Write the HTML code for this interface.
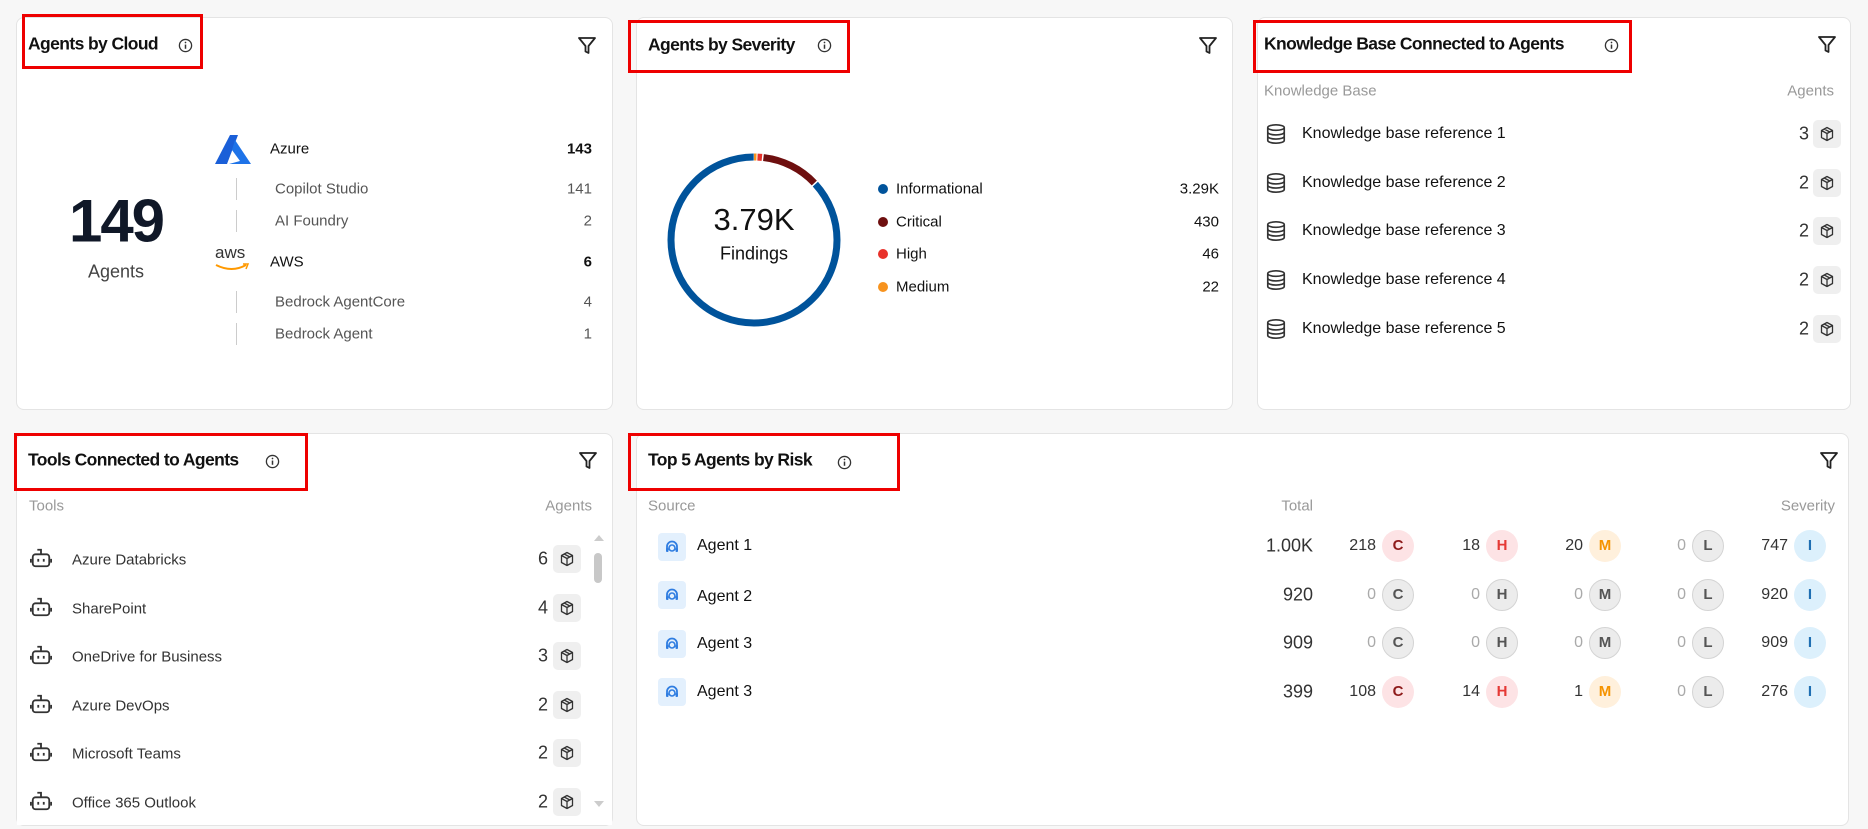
<!DOCTYPE html>
<html><head><meta charset="utf-8"><style>
*{box-sizing:border-box;margin:0;padding:0}
body{width:1868px;height:829px;background:#f7f7f7;font-family:"Liberation Sans",Arial,sans-serif;position:relative;overflow:hidden;color:#111}
.a{position:absolute;white-space:nowrap}
.card{position:absolute;background:#fff;border:1px solid #e4e4e4;border-radius:8px}
.red{position:absolute;border:3px solid #ee0000}
.t{font-size:17.5px;font-weight:bold;letter-spacing:-0.6px;transform:translateY(-50%)}
.m{transform:translateY(-50%)}
.r{transform:translate(-100%,-50%)}
.hd{font-size:15px;color:#999;transform:translateY(-50%)}
.hdr{font-size:15px;color:#999;transform:translate(-100%,-50%)}
.sub{font-size:15px;color:#555}
.cube{position:absolute;width:28px;height:28px;background:#efefef;border-radius:5px;transform:translateY(-50%)}
.badge{position:absolute;width:32px;height:32px;border-radius:50%;transform:translate(-50%,-50%);font-size:15px;font-weight:bold;text-align:center;line-height:32px}
.bC{background:#fde3e5;color:#8e1b1b}.bH{background:#fde3e5;color:#e53935}.bM{background:#fff0dc;color:#f59300}
.bG{background:#ececec;color:#555;border:1px solid #d4d4d4;line-height:30px}.bI{background:#dcf0fc;color:#1f6fb3}
.num{font-size:16px;color:#333;transform:translate(-100%,-50%)}
.z{color:#aaa}
</style></head><body>
<svg width="0" height="0" style="position:absolute"><defs>
<symbol id="info" viewBox="0 0 16 16"><circle cx="8" cy="8" r="6.5" fill="none" stroke="#333" stroke-width="1.4"/><line x1="8" y1="7" x2="8" y2="11.5" stroke="#333" stroke-width="1.6"/><circle cx="8" cy="4.8" r="0.9" fill="#333"/></symbol>
<symbol id="filt" viewBox="0 0 20 20"><path d="M2 3H18L11.5 11V18L8.5 16.5V11Z" fill="none" stroke="#222" stroke-width="1.8" stroke-linejoin="round"/></symbol>
<symbol id="cubeI" viewBox="0 0 16 16"><path d="M8 1.5L13.5 4.5V11.5L8 14.5L2.5 11.5V4.5Z M2.5 4.5L8 7.5L13.5 4.5 M8 7.5V14.5 M5.2 3L10.8 6" fill="none" stroke="#333" stroke-width="1.3" stroke-linejoin="round"/></symbol>
<symbol id="db" viewBox="0 0 24 24"><ellipse cx="12" cy="5" rx="9" ry="3" fill="none" stroke="#333" stroke-width="1.8"/><path d="M3 5V19C3 20.7 7 22 12 22S21 20.7 21 19V5 M3 10C3 11.7 7 13 12 13S21 11.7 21 10 M3 14.5C3 16.2 7 17.5 12 17.5S21 16.2 21 14.5" fill="none" stroke="#333" stroke-width="1.8"/></symbol>
<symbol id="bot" viewBox="0 0 24 24"><rect x="3" y="8" width="18" height="13" rx="3" fill="none" stroke="#333" stroke-width="2"/><path d="M12 8V3H8 M1 13V17 M23 13V17" fill="none" stroke="#333" stroke-width="2"/><line x1="9" y1="13" x2="9" y2="16" stroke="#333" stroke-width="2"/><line x1="15" y1="13" x2="15" y2="16" stroke="#333" stroke-width="2"/></symbol>
<symbol id="ag" viewBox="0 0 16 16"><path d="M3 11V7.5A5 5 0 0 1 13 7.5V11" fill="none" stroke="#2f7de1" stroke-width="1.8"/><circle cx="8" cy="9" r="3" fill="none" stroke="#2f7de1" stroke-width="1.6"/><rect x="2" y="9" width="2.5" height="4" rx="1" fill="#2f7de1"/><rect x="11.5" y="9" width="2.5" height="4" rx="1" fill="#2f7de1"/></symbol>
</defs></svg>

<!-- Card 1 -->
<div class="card" style="left:16px;top:17px;width:597px;height:393px"></div>
<div class="red" style="left:22px;top:14px;width:181px;height:55px"></div>
<div class="a t" style="left:28px;top:44px">Agents by Cloud</div>
<svg class="a" style="left:178px;top:38px" width="15" height="15"><use href="#info"/></svg>
<svg class="a" style="left:577px;top:35px" width="20" height="20"><use href="#filt"/></svg>
<div class="a" style="left:116px;top:221px;transform:translate(-50%,-50%);font-size:60px;font-weight:bold;color:#101828;letter-spacing:-2px">149</div>
<div class="a" style="left:116px;top:272px;transform:translate(-50%,-50%);font-size:18px;color:#444">Agents</div>
<svg class="a" style="left:215px;top:135px" width="36" height="29" viewBox="0 0 36 29"><path d="M15 0L23 0L12 29H0Z" fill="#1a5fd8"/><path d="M20 5L36 29H14L25 26L17 15Z" fill="#1e73e8"/></svg>
<div class="a m" style="left:270px;top:149px;font-size:15px">Azure</div>
<div class="a r" style="left:592px;top:149px;font-size:15px;font-weight:bold">143</div>
<div class="a" style="left:236px;top:178px;width:1px;height:22px;background:#ccc"></div>
<div class="a" style="left:236px;top:210px;width:1px;height:22px;background:#ccc"></div>
<div class="a m sub" style="left:275px;top:189px">Copilot Studio</div>
<div class="a r sub" style="left:592px;top:189px">141</div>
<div class="a m sub" style="left:275px;top:221px">AI Foundry</div>
<div class="a r sub" style="left:592px;top:221px">2</div>
<div class="a" style="left:215px;top:246px;font-size:17px;color:#333;line-height:14px">aws</div>
<svg class="a" style="left:215px;top:263px" width="35" height="9"><path d="M1 2Q17 10 31 2" fill="none" stroke="#f90" stroke-width="2"/><path d="M28 1L33 1L31 6" fill="none" stroke="#f90" stroke-width="1.5"/></svg>
<div class="a m" style="left:270px;top:262px;font-size:15px">AWS</div>
<div class="a r" style="left:592px;top:262px;font-size:15px;font-weight:bold">6</div>
<div class="a" style="left:236px;top:291px;width:1px;height:22px;background:#ccc"></div>
<div class="a" style="left:236px;top:323px;width:1px;height:22px;background:#ccc"></div>
<div class="a m sub" style="left:275px;top:302px">Bedrock AgentCore</div>
<div class="a r sub" style="left:592px;top:302px">4</div>
<div class="a m sub" style="left:275px;top:334px">Bedrock Agent</div>
<div class="a r sub" style="left:592px;top:334px">1</div>

<!-- Card 2 -->
<div class="card" style="left:636px;top:17px;width:597px;height:393px"></div>
<div class="red" style="left:628px;top:20px;width:222px;height:53px"></div>
<div class="a t" style="left:648px;top:45px">Agents by Severity</div>
<svg class="a" style="left:817px;top:38px" width="15" height="15"><use href="#info"/></svg>
<svg class="a" style="left:1198px;top:35px" width="20" height="20"><use href="#filt"/></svg>
<svg class="a" style="left:664px;top:150px" width="180" height="180" viewBox="0 0 180 180">
<g transform="rotate(-90 90 90)" fill="none" stroke-width="7">
<circle cx="90" cy="90" r="83" stroke="#00539b" stroke-dasharray="452 600" stroke-dashoffset="-69"/>
<circle cx="90" cy="90" r="83" stroke="#6e0f0f" stroke-dasharray="58 600" stroke-dashoffset="-9.5"/>
<circle cx="90" cy="90" r="83" stroke="#e8312a" stroke-dasharray="4.5 600" stroke-dashoffset="-3.5"/>
<circle cx="90" cy="90" r="83" stroke="#f7931e" stroke-dasharray="2.5 600" stroke-dashoffset="0"/>
</g></svg>
<div class="a" style="left:754px;top:220px;transform:translate(-50%,-50%);font-size:31px">3.79K</div>
<div class="a" style="left:754px;top:254px;transform:translate(-50%,-50%);font-size:18px">Findings</div>
<div class="a" style="left:878px;top:184px;width:10px;height:10px;border-radius:50%;background:#00539b"></div>
<div class="a" style="left:878px;top:217px;width:10px;height:10px;border-radius:50%;background:#6e0f0f"></div>
<div class="a" style="left:878px;top:249px;width:10px;height:10px;border-radius:50%;background:#e8312a"></div>
<div class="a" style="left:878px;top:282px;width:10px;height:10px;border-radius:50%;background:#f7931e"></div>
<div class="a m" style="left:896px;top:189px;font-size:15px">Informational</div>
<div class="a m" style="left:896px;top:222px;font-size:15px">Critical</div>
<div class="a m" style="left:896px;top:254px;font-size:15px">High</div>
<div class="a m" style="left:896px;top:287px;font-size:15px">Medium</div>
<div class="a r" style="left:1219px;top:189px;font-size:15px">3.29K</div>
<div class="a r" style="left:1219px;top:222px;font-size:15px">430</div>
<div class="a r" style="left:1219px;top:254px;font-size:15px">46</div>
<div class="a r" style="left:1219px;top:287px;font-size:15px">22</div>

<!-- Card 3 -->
<div class="card" style="left:1257px;top:17px;width:594px;height:393px"></div>
<div class="red" style="left:1253px;top:20px;width:379px;height:53px"></div>
<div class="a t" style="left:1264px;top:44px">Knowledge Base Connected to Agents</div>
<svg class="a" style="left:1604px;top:38px" width="15" height="15"><use href="#info"/></svg>
<svg class="a" style="left:1817px;top:34px" width="20" height="20"><use href="#filt"/></svg>
<div class="a hd" style="left:1264px;top:91px">Knowledge Base</div>
<div class="a hdr" style="left:1834px;top:91px">Agents</div>

<svg class="a" style="left:1265px;top:122px" width="22" height="24"><use href="#db"/></svg>
<div class="a m" style="left:1302px;top:134px;font-size:16px">Knowledge base reference 1</div>
<div class="a r" style="left:1809px;top:134px;font-size:18px;color:#333">3</div>
<div class="cube" style="left:1813px;top:134px"><svg style="position:absolute;left:6px;top:6px" width="16" height="16"><use href="#cubeI"/></svg></div>

<svg class="a" style="left:1265px;top:171px" width="22" height="24"><use href="#db"/></svg>
<div class="a m" style="left:1302px;top:183px;font-size:16px">Knowledge base reference 2</div>
<div class="a r" style="left:1809px;top:183px;font-size:18px;color:#333">2</div>
<div class="cube" style="left:1813px;top:183px"><svg style="position:absolute;left:6px;top:6px" width="16" height="16"><use href="#cubeI"/></svg></div>

<svg class="a" style="left:1265px;top:219px" width="22" height="24"><use href="#db"/></svg>
<div class="a m" style="left:1302px;top:231px;font-size:16px">Knowledge base reference 3</div>
<div class="a r" style="left:1809px;top:231px;font-size:18px;color:#333">2</div>
<div class="cube" style="left:1813px;top:231px"><svg style="position:absolute;left:6px;top:6px" width="16" height="16"><use href="#cubeI"/></svg></div>

<svg class="a" style="left:1265px;top:268px" width="22" height="24"><use href="#db"/></svg>
<div class="a m" style="left:1302px;top:280px;font-size:16px">Knowledge base reference 4</div>
<div class="a r" style="left:1809px;top:280px;font-size:18px;color:#333">2</div>
<div class="cube" style="left:1813px;top:280px"><svg style="position:absolute;left:6px;top:6px" width="16" height="16"><use href="#cubeI"/></svg></div>

<svg class="a" style="left:1265px;top:317px" width="22" height="24"><use href="#db"/></svg>
<div class="a m" style="left:1302px;top:329px;font-size:16px">Knowledge base reference 5</div>
<div class="a r" style="left:1809px;top:329px;font-size:18px;color:#333">2</div>
<div class="cube" style="left:1813px;top:329px"><svg style="position:absolute;left:6px;top:6px" width="16" height="16"><use href="#cubeI"/></svg></div>

<!-- Card 4 Tools -->
<div class="card" style="left:16px;top:433px;width:597px;height:393px"></div>
<div class="red" style="left:14px;top:433px;width:294px;height:58px"></div>
<div class="a t" style="left:28px;top:460px">Tools Connected to Agents</div>
<svg class="a" style="left:265px;top:454px" width="15" height="15"><use href="#info"/></svg>
<svg class="a" style="left:578px;top:450px" width="20" height="20"><use href="#filt"/></svg>
<div class="a hd" style="left:29px;top:506px">Tools</div>
<div class="a hdr" style="left:592px;top:506px">Agents</div>
<div class="a" style="left:594px;top:535px;width:0;height:0;border-left:5px solid transparent;border-right:5px solid transparent;border-bottom:6px solid #ccc"></div>
<div class="a" style="left:594px;top:553px;width:8px;height:30px;border-radius:4px;background:#c8c8c8"></div>
<div class="a" style="left:594px;top:801px;width:0;height:0;border-left:5px solid transparent;border-right:5px solid transparent;border-top:6px solid #ccc"></div>
<div class="a" style="left:17px;top:816px;width:595px;height:9px;background:#fff;z-index:2"></div>

<svg class="a" style="left:30px;top:547px" width="22" height="22"><use href="#bot"/></svg>
<div class="a m sub" style="left:72px;top:560px;color:#333">Azure Databricks</div>
<div class="a r" style="left:548px;top:559px;font-size:18px;color:#333">6</div>
<div class="cube" style="left:553px;top:559px"><svg style="position:absolute;left:6px;top:6px" width="16" height="16"><use href="#cubeI"/></svg></div>

<svg class="a" style="left:30px;top:596px" width="22" height="22"><use href="#bot"/></svg>
<div class="a m sub" style="left:72px;top:609px;color:#333">SharePoint</div>
<div class="a r" style="left:548px;top:608px;font-size:18px;color:#333">4</div>
<div class="cube" style="left:553px;top:608px"><svg style="position:absolute;left:6px;top:6px" width="16" height="16"><use href="#cubeI"/></svg></div>

<svg class="a" style="left:30px;top:644px" width="22" height="22"><use href="#bot"/></svg>
<div class="a m sub" style="left:72px;top:657px;color:#333">OneDrive for Business</div>
<div class="a r" style="left:548px;top:656px;font-size:18px;color:#333">3</div>
<div class="cube" style="left:553px;top:656px"><svg style="position:absolute;left:6px;top:6px" width="16" height="16"><use href="#cubeI"/></svg></div>

<svg class="a" style="left:30px;top:693px" width="22" height="22"><use href="#bot"/></svg>
<div class="a m sub" style="left:72px;top:706px;color:#333">Azure DevOps</div>
<div class="a r" style="left:548px;top:705px;font-size:18px;color:#333">2</div>
<div class="cube" style="left:553px;top:705px"><svg style="position:absolute;left:6px;top:6px" width="16" height="16"><use href="#cubeI"/></svg></div>

<svg class="a" style="left:30px;top:741px" width="22" height="22"><use href="#bot"/></svg>
<div class="a m sub" style="left:72px;top:754px;color:#333">Microsoft Teams</div>
<div class="a r" style="left:548px;top:753px;font-size:18px;color:#333">2</div>
<div class="cube" style="left:553px;top:753px"><svg style="position:absolute;left:6px;top:6px" width="16" height="16"><use href="#cubeI"/></svg></div>

<svg class="a" style="left:30px;top:790px" width="22" height="22"><use href="#bot"/></svg>
<div class="a m sub" style="left:72px;top:803px;color:#333">Office 365 Outlook</div>
<div class="a r" style="left:548px;top:802px;font-size:18px;color:#333">2</div>
<div class="cube" style="left:553px;top:802px"><svg style="position:absolute;left:6px;top:6px" width="16" height="16"><use href="#cubeI"/></svg></div>

<!-- Card 5 Top 5 -->
<div class="card" style="left:636px;top:433px;width:1213px;height:393px"></div>
<div class="red" style="left:628px;top:433px;width:272px;height:58px"></div>
<div class="a t" style="left:648px;top:460px">Top 5 Agents by Risk</div>
<svg class="a" style="left:837px;top:455px" width="15" height="15"><use href="#info"/></svg>
<svg class="a" style="left:1819px;top:450px" width="20" height="20"><use href="#filt"/></svg>
<div class="a hd" style="left:648px;top:506px">Source</div>
<div class="a hdr" style="left:1313px;top:506px">Total</div>
<div class="a hdr" style="left:1835px;top:506px">Severity</div>

<div class="a" style="left:658px;top:533px;width:28px;height:28px;border-radius:4px;background:#e3f0fd"><svg style="position:absolute;left:6px;top:6px" width="16" height="16"><use href="#ag"/></svg></div>
<div class="a m" style="left:697px;top:546px;font-size:16px">Agent 1</div>
<div class="a num" style="left:1313px;top:546px;font-size:18px">1.00K</div>
<div class="a num" style="left:1376px;top:546px">218</div><div class="badge bC" style="left:1398px;top:546px">C</div>
<div class="a num" style="left:1480px;top:546px">18</div><div class="badge bH" style="left:1502px;top:546px">H</div>
<div class="a num" style="left:1583px;top:546px">20</div><div class="badge bM" style="left:1605px;top:546px">M</div>
<div class="a num z" style="left:1686px;top:546px">0</div><div class="badge bG" style="left:1708px;top:546px">L</div>
<div class="a num" style="left:1788px;top:546px">747</div><div class="badge bI" style="left:1810px;top:546px">I</div>

<div class="a" style="left:658px;top:581px;width:28px;height:28px;border-radius:4px;background:#e3f0fd"><svg style="position:absolute;left:6px;top:6px" width="16" height="16"><use href="#ag"/></svg></div>
<div class="a m" style="left:697px;top:597px;font-size:16px">Agent 2</div>
<div class="a num" style="left:1313px;top:595px;font-size:18px">920</div>
<div class="a num z" style="left:1376px;top:595px">0</div><div class="badge bG" style="left:1398px;top:595px">C</div>
<div class="a num z" style="left:1480px;top:595px">0</div><div class="badge bG" style="left:1502px;top:595px">H</div>
<div class="a num z" style="left:1583px;top:595px">0</div><div class="badge bG" style="left:1605px;top:595px">M</div>
<div class="a num z" style="left:1686px;top:595px">0</div><div class="badge bG" style="left:1708px;top:595px">L</div>
<div class="a num" style="left:1788px;top:595px">920</div><div class="badge bI" style="left:1810px;top:595px">I</div>

<div class="a" style="left:658px;top:630px;width:28px;height:28px;border-radius:4px;background:#e3f0fd"><svg style="position:absolute;left:6px;top:6px" width="16" height="16"><use href="#ag"/></svg></div>
<div class="a m" style="left:697px;top:644px;font-size:16px">Agent 3</div>
<div class="a num" style="left:1313px;top:643px;font-size:18px">909</div>
<div class="a num z" style="left:1376px;top:643px">0</div><div class="badge bG" style="left:1398px;top:643px">C</div>
<div class="a num z" style="left:1480px;top:643px">0</div><div class="badge bG" style="left:1502px;top:643px">H</div>
<div class="a num z" style="left:1583px;top:643px">0</div><div class="badge bG" style="left:1605px;top:643px">M</div>
<div class="a num z" style="left:1686px;top:643px">0</div><div class="badge bG" style="left:1708px;top:643px">L</div>
<div class="a num" style="left:1788px;top:643px">909</div><div class="badge bI" style="left:1810px;top:643px">I</div>

<div class="a" style="left:658px;top:678px;width:28px;height:28px;border-radius:4px;background:#e3f0fd"><svg style="position:absolute;left:6px;top:6px" width="16" height="16"><use href="#ag"/></svg></div>
<div class="a m" style="left:697px;top:692px;font-size:16px">Agent 3</div>
<div class="a num" style="left:1313px;top:692px;font-size:18px">399</div>
<div class="a num" style="left:1376px;top:692px">108</div><div class="badge bC" style="left:1398px;top:692px">C</div>
<div class="a num" style="left:1480px;top:692px">14</div><div class="badge bH" style="left:1502px;top:692px">H</div>
<div class="a num" style="left:1583px;top:692px">1</div><div class="badge bM" style="left:1605px;top:692px">M</div>
<div class="a num z" style="left:1686px;top:692px">0</div><div class="badge bG" style="left:1708px;top:692px">L</div>
<div class="a num" style="left:1788px;top:692px">276</div><div class="badge bI" style="left:1810px;top:692px">I</div>
</body></html>
